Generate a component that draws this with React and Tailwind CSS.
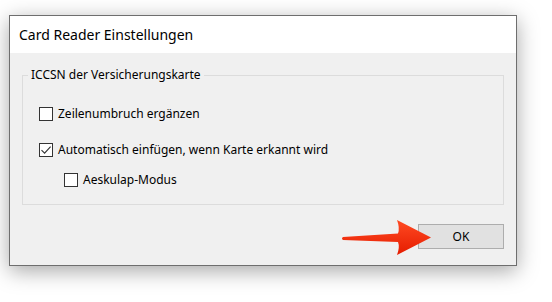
import React from "react";

function Checkbox({ checked, label, indent }) {
  return (
    <label className={`flex items-center gap-[5px] ${indent ? "pl-[41px]" : "pl-[16px]"}`}>
      <span className="w-[14px] h-[14px] border border-[#333333] bg-white flex items-center justify-center">
        {checked && (
          <svg width="12" height="12" viewBox="0 0 12 12">
            <path d="M1.5 6.2 L4.6 9.2 L10.6 2.6" fill="none" stroke="#333" strokeWidth="1.1" />
          </svg>
        )}
      </span>
      <span>{label}</span>
    </label>
  );
}

export default function App() {
  return (
    <div className="w-[552px] h-[302px] bg-white relative font-['Noto_Sans',sans-serif] text-black">
      <div className="pl-[9px] pt-[15px]">
        <div className="w-[508px] h-[251px] border border-[#6e6e6e] flex flex-col shadow-[0_5px_20px_rgba(0,0,0,0.35)]">
          <div className="h-[37px] bg-white flex items-center pl-[9px] text-[14px]">
            Card Reader Einstellungen
          </div>
          <div className="flex-1 bg-[#f0f0f0] flex flex-col px-[12px] pt-[13px] text-[12px]">
            <fieldset className="border border-[#dcdcdc] h-[139px]">
              <legend className="ml-[5px] px-[3px]">ICCSN der Versicherungskarte</legend>
              <div className="flex flex-col pt-[21px]">
                <Checkbox label="Zeilenumbruch ergänzen" />
                <div className="h-[18px]" />
                <Checkbox checked label="Automatisch einfügen, wenn Karte erkannt wird" />
                <div className="h-[12px]" />
                <Checkbox indent label="Aeskulap-Modus" />
              </div>
            </fieldset>
            <div className="flex justify-end mt-[19px]">
              <button className="w-[86px] h-[25px] bg-[#e1e1e1] border border-[#adadad] text-[12px]">
                OK
              </button>
            </div>
          </div>
        </div>
      </div>
      <svg
        className="absolute left-[338px] top-[216px]"
        width="98"
        height="44"
        viewBox="338 216 98 44"
      >
        <defs>
          <linearGradient id="ar" x1="0" y1="0" x2="0" y2="1">
            <stop offset="0" stopColor="#ff4a22" />
            <stop offset="1" stopColor="#e51c00" />
          </linearGradient>
        </defs>
        <path
          d="M343 237 L398 233.5 Q400 228 397 220 L431 237.5 L397 255 Q400 247 398 242 L343 240 Q341 238.5 343 237 Z"
          fill="url(#ar)"
        />
      </svg>
    </div>
  );
}
